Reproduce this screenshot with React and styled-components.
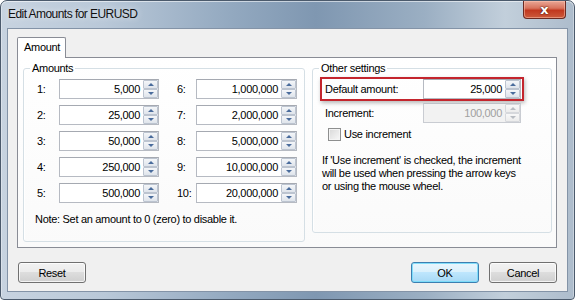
import styled, { createGlobalStyle } from "styled-components";

const UI_FONT = `"Liberation Sans", Arial, sans-serif`;

const GlobalStyle = createGlobalStyle`
  body {
    margin: 0;
    background: #ffffff;
    font-family: ${UI_FONT};
    font-size: 11px;
    letter-spacing: -0.3px;
    color: #000;
  }
`;

const Window = styled.div`
  width: 575px;
  height: 300px;
  box-sizing: border-box;
  display: flex;
  flex-direction: column;
  border: 1px solid #4b5a6c;
  border-radius: 7px 7px 4px 4px;
  overflow: hidden;
  background: linear-gradient(
    90deg,
    #c7d3e0 0%,
    #b9c8d8 18%,
    #93a9c0 40%,
    #7f97b1 55%,
    #9bafc3 74%,
    #c2cfdb 88%,
    #adbccc 100%
  );
  box-shadow: inset 0 1px 0 rgba(255, 255, 255, 0.55),
    inset 1px 0 0 rgba(255, 255, 255, 0.35),
    inset -1px 0 0 rgba(255, 255, 255, 0.35);
`;

const TitleBar = styled.div`
  height: 27px;
  flex: none;
  display: flex;
  align-items: flex-start;
  padding: 0 8px 0 7px;
`;

const Title = styled.div`
  margin-top: 6px;
  font-size: 12px;
  line-height: 14px;
  letter-spacing: -0.55px;
  color: #111;
  text-shadow: 0 0 6px rgba(255, 255, 255, 0.8);
`;

const CloseButton = styled.div`
  margin-left: auto;
  width: 43px;
  height: 18px;
  box-sizing: border-box;
  border: 1px solid #6b2a22;
  border-top: none;
  border-radius: 0 0 4px 4px;
  background: linear-gradient(#e9a796 0%, #d8735d 42%, #c1381f 55%, #cc5a3c 100%);
  box-shadow: inset 0 0 0 1px rgba(255, 200, 180, 0.5);
  display: flex;
  align-items: center;
  justify-content: center;
  color: #fff;
  font-family: "DejaVu Sans", sans-serif;
  font-weight: bold;
  font-size: 13px;
  letter-spacing: 0;
  text-shadow: 0 0 2px #4d150b, 0 0 1px #4d150b;
`;

const Frame = styled.div`
  flex: 1;
  display: flex;
  padding: 0 6px 7px;
`;

const Client = styled.div`
  flex: 1;
  display: flex;
  flex-direction: column;
  border: 1px solid #8393a7;
  background: #f0f0f0;
  padding: 8px 10px 0 9px;
`;

const TabStrip = styled.div`
  display: flex;
  height: 20px;
`;

const Tab = styled.div`
  position: relative;
  z-index: 1;
  width: 49px;
  height: 21px;
  box-sizing: border-box;
  border: 1px solid #898c95;
  border-bottom: none;
  border-radius: 2px 2px 0 0;
  background: #ffffff;
  padding-left: 6px;
  line-height: 19px;
`;

const TabPanel = styled.div`
  height: 191px;
  box-sizing: border-box;
  border: 1px solid #898c95;
  background: linear-gradient(#ffffff, #fafafa);
  padding: 3px 4px 0 5px;
  display: flex;
  align-items: flex-start;
  gap: 7px;
`;

const Group = styled.fieldset`
  margin: 0;
  padding: 0;
  width: ${(p) => p.$w}px;
  height: ${(p) => p.$h}px;
  box-sizing: border-box;
  border: 1px solid #d5dfe5;
  border-radius: 3px;
  box-shadow: inset 1px 1px 0 #ffffff;
`;

const Legend = styled.legend`
  margin-left: 6px;
  padding: 0 2px;
  line-height: 14px;
`;

const GroupBody = styled.div`
  padding: ${(p) => p.$pad};
`;

const AmountGrid = styled.div`
  display: grid;
  grid-template-columns: 122px 120px;
  grid-template-rows: repeat(5, 20px);
  grid-auto-flow: column;
  column-gap: 18px;
  row-gap: 6px;
`;

const Cell = styled.div`
  display: flex;
  align-items: center;
`;

const CellLabel = styled.span`
  flex: none;
  width: ${(p) => p.$w}px;
`;

const Note = styled.div`
  margin: 9px 0 0 -2px;
  line-height: 14px;
`;

const SpinFrame = styled.div`
  flex: none;
  width: ${(p) => p.$w}px;
  height: 20px;
  box-sizing: border-box;
  display: flex;
  border: 1px solid ${(p) => (p.$disabled ? "#c9ccd2" : "#b6bac2")};
  border-top-color: ${(p) => (p.$disabled ? "#bfc2c8" : "#a5a9b1")};
  background: ${(p) => (p.$disabled ? "#f2f2f2" : "#ffffff")};
  color: ${(p) => (p.$disabled ? "#a0a0a0" : "#000")};
`;

const SpinText = styled.div`
  flex: 1;
  text-align: right;
  padding-right: 3px;
  line-height: 18px;
`;

const SpinButtons = styled.div`
  flex: none;
  width: 15px;
  display: flex;
  flex-direction: column;
`;

const SpinButton = styled.div`
  flex: 1;
  display: flex;
  align-items: center;
  justify-content: center;
  border: 1px solid ${(p) => (p.$disabled ? "#d6d8dc" : "#bcc4d0")};
  border-radius: 1px;
  background: ${(p) =>
    p.$disabled ? "linear-gradient(#f8f8f8, #ececec)" : "linear-gradient(#f4f6f9, #dfe4eb)"};

  &::after {
    content: "";
    width: 0;
    height: 0;
    border-left: 3px solid transparent;
    border-right: 3px solid transparent;
    ${(p) => (p.$down ? "border-top" : "border-bottom")}: 3px solid
      ${(p) => (p.$disabled ? "#b8bcc2" : "#4a6c9c")};
  }
`;

const HighlightRow = styled.div`
  display: flex;
  align-items: center;
  width: 204px;
  box-sizing: border-box;
  border: 2px solid #c4252d;
  padding-left: 3px;
  box-shadow: 1px 2px 4px rgba(0, 0, 0, 0.28);
`;

const FieldRow = styled.div`
  display: flex;
  align-items: center;
  margin-top: 2px;
  padding-left: 5px;
`;

const FieldLabel = styled.span`
  flex: none;
  width: 98px;
`;

const CheckRow = styled.div`
  display: flex;
  align-items: center;
  gap: 3px;
  margin-top: 5px;
  padding-left: 8px;
  line-height: 13px;
`;

const CheckBox = styled.span`
  width: 13px;
  height: 13px;
  box-sizing: border-box;
  border: 1px solid #8e8f8f;
  background: linear-gradient(135deg, #d8d8d8, #f8f8f8);
  box-shadow: inset 0 0 0 1px #f4f4f4;
`;

const HelpText = styled.p`
  margin: 13px 0 0 2px;
  line-height: 13px;
`;

const ButtonRow = styled.div`
  display: flex;
  gap: 10px;
  margin: 14px 0 0 1px;
`;

const Button = styled.div`
  width: 68px;
  height: 21px;
  box-sizing: border-box;
  display: flex;
  align-items: center;
  justify-content: center;
  border: 1px solid ${(p) => (p.$primary ? "#3c7fb1" : "#707070")};
  border-radius: 3px;
  background: ${(p) =>
    p.$primary
      ? "linear-gradient(#eaf6fd 0%, #d9f0fc 50%, #bee6fd 50%, #a7d9f5 100%)"
      : "linear-gradient(#f2f2f2 0%, #ebebeb 50%, #dddddd 50%, #cfcfcf 100%)"};
  box-shadow: inset 0 0 0 1px
    ${(p) => (p.$primary ? "rgba(120, 220, 250, 0.9)" : "rgba(255, 255, 255, 0.75)")};
  ${(p) => p.$push && "margin-right: auto;"}
`;

const SpinBox = ({ value, width = 100, disabled }) => (
  <SpinFrame $w={width} $disabled={disabled}>
    <SpinText>{value}</SpinText>
    <SpinButtons>
      <SpinButton $disabled={disabled} />
      <SpinButton $disabled={disabled} $down />
    </SpinButtons>
  </SpinFrame>
);

const amounts = [
  ["1:", "5,000"],
  ["2:", "25,000"],
  ["3:", "50,000"],
  ["4:", "250,000"],
  ["5:", "500,000"],
  ["6:", "1,000,000"],
  ["7:", "2,000,000"],
  ["8:", "5,000,000"],
  ["9:", "10,000,000"],
  ["10:", "20,000,000"],
];

export default function App() {
  return (
    <>
      <GlobalStyle />
      <Window>
        <TitleBar>
          <Title>Edit Amounts for EURUSD</Title>
          <CloseButton>x</CloseButton>
        </TitleBar>
        <Frame>
          <Client>
            <TabStrip>
              <Tab>Amount</Tab>
            </TabStrip>
            <TabPanel>
              <Group $w={282} $h={181}>
                <Legend>Amounts</Legend>
                <GroupBody $pad="4px 0 0 13px">
                  <AmountGrid>
                    {amounts.map(([label, value], i) => (
                      <Cell key={label}>
                        <CellLabel $w={i < 5 ? 22 : 19}>{label}</CellLabel>
                        <SpinBox value={value} width={i < 5 ? 100 : 101} />
                      </Cell>
                    ))}
                  </AmountGrid>
                  <Note>Note: Set an amount to 0 (zero) to disable it.</Note>
                </GroupBody>
              </Group>
              <Group $w={240} $h={172}>
                <Legend>Other settings</Legend>
                <GroupBody $pad="2px 0 0 7px">
                  <HighlightRow>
                    <FieldLabel>Default amount:</FieldLabel>
                    <SpinBox value="25,000" width={98} />
                  </HighlightRow>
                  <FieldRow>
                    <FieldLabel>Increment:</FieldLabel>
                    <SpinBox value="100,000" width={98} disabled />
                  </FieldRow>
                  <CheckRow>
                    <CheckBox />
                    <span>Use increment</span>
                  </CheckRow>
                  <HelpText>
                    If 'Use increment' is checked, the increment
                    <br />
                    will be used when pressing the arrow keys
                    <br />
                    or using the mouse wheel.
                  </HelpText>
                </GroupBody>
              </Group>
            </TabPanel>
            <ButtonRow>
              <Button $push>Reset</Button>
              <Button $primary>OK</Button>
              <Button>Cancel</Button>
            </ButtonRow>
          </Client>
        </Frame>
      </Window>
    </>
  );
}
